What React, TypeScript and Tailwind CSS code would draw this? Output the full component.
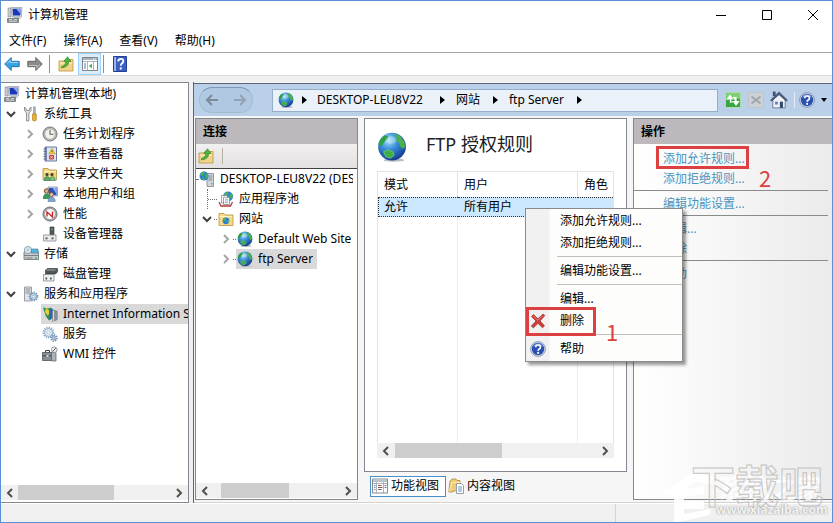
import type { ReactNode } from "react";

const FONT = "font-['Noto_Sans','Noto_Sans_CJK_SC',sans-serif]";

/* ---------- icons ---------- */

function Svg({ children, box = "0 0 16 16", className = "size-4" }: { children: ReactNode; box?: string; className?: string }) {
  return (
    <svg viewBox={box} className={`${className} shrink-0`} aria-hidden="true">
      {children}
    </svg>
  );
}

const ComputerIcon = () => (
  <Svg>
    <path d="M1 1h3v9H1z" fill="#c9ccd0" stroke="#83878c" strokeWidth=".6" />
    <path d="M4 0.5h11l-.6 9.5H5z" fill="#d9dde2" stroke="#8a8f98" strokeWidth=".6" />
    <path d="M5.5 1.8h8.2l-.4 6.8H6z" fill="#1c36b8" />
    <path d="M9 1.8h4.7l-.3 5z" fill="#8ea8ee" />
    <path d="M7 10h5l2 1.8H7z" fill="#b4b8bd" />
    <path d="M0.5 11.5h11v4H.5z" fill="#84898c" stroke="#5d6164" strokeWidth=".6" />
    <path d="M2 12.6h3M7 12.6h3M2 14.2h8" stroke="#dfe3e4" strokeWidth=".9" />
  </Svg>
);

const ToolsIcon = () => (
  <Svg>
    <path d="M1.500 1v3.500L3.500 7v8h2.400V7L8 4.500V1L6.300 2.800v1.700H3.300V2.800z" fill="#e3e5e8" stroke="#73787e" strokeWidth=".8" />
    <path d="M10.500 .8h1.800v7h-1.800z" fill="#aeb3b8" stroke="#7b8086" strokeWidth=".5" />
    <path d="M9.600 8h3.600v6.200q-1.800 1.600-3.600 0z" fill="#eeb62a" stroke="#a87611" strokeWidth=".7" />
  </Svg>
);

const ClockIcon = () => (
  <Svg>
    <circle cx="8" cy="8" r="7" fill="#b8bcc0" stroke="#74787c" />
    <circle cx="8" cy="8" r="5.200" fill="#f4f2e4" stroke="#9b9c9a" strokeWidth=".6" />
    <path d="M8 4v4.300h3.500" fill="none" stroke="#596673" strokeWidth="1.100" />
  </Svg>
);

const EventIcon = () => (
  <Svg>
    <path d="M3 1h11.500v14H3z" fill="#dde4f0" stroke="#5a6d94" strokeWidth=".9" />
    <path d="M3 1h2v14H3z" fill="#7186b3" />
    <path d="M1.500 3h2.500M1.500 5.500h2.500M1.500 8h2.500M1.500 10.500h2.500M1.500 13h2.500" stroke="#555f70" strokeWidth=".8" />
    <path d="M10 2.500l3.200 5.300H6.800z" fill="#f8d436" stroke="#a98813" strokeWidth=".5" />
    <path d="M10 4.300v2" stroke="#4c3c00" strokeWidth=".9" />
    <rect x="7" y="9" width="5" height="4.600" rx="1" fill="#d63c35" />
    <path d="M8.400 10.200l2.200 2.200m0-2.200l-2.200 2.200" stroke="#fff" strokeWidth=".8" />
  </Svg>
);

const SharedIcon = () => (
  <Svg>
    <path d="M1 2.500h5l1 1.500h7.500v10H1z" fill="#f3d67c" stroke="#b6913b" strokeWidth=".8" />
    <path d="M2 5.500h12" stroke="#fff2bd" />
    <circle cx="5" cy="8.500" r="1.600" fill="#31493a" />
    <path d="M2 14.500q.2-4 3-4t3 4z" fill="#54ab6e" stroke="#2d6e43" strokeWidth=".5" />
    <circle cx="10" cy="8.500" r="1.600" fill="#4a3a2d" />
    <path d="M7.800 14.500q.2-4 2.700-4t2.700 4z" fill="#78c38a" stroke="#2d6e43" strokeWidth=".5" />
  </Svg>
);

const UsersIcon = () => (
  <Svg>
    <path d="M6 1h9.500v9H6z" fill="#cbd4e4" stroke="#7f8ba3" strokeWidth=".7" />
    <path d="M7 2h7.500v7H7z" fill="#2c4fbe" />
    <path d="M10.500 2H14.500v6z" fill="#91abec" />
    <circle cx="4.500" cy="5" r="2.300" fill="#d8a87c" stroke="#5f402a" strokeWidth=".8" />
    <path d="M.8 13q.3-5.500 3.800-5.500T8.300 13z" fill="#3f9658" />
    <circle cx="9.500" cy="8.500" r="2" fill="#e7c49d" stroke="#72513a" strokeWidth=".8" />
    <path d="M6 15.500q.2-4.500 3.500-4.500t3.800 4.500z" fill="#83a5d4" stroke="#4b6c9d" strokeWidth=".5" />
  </Svg>
);

const PerfIcon = () => (
  <Svg>
    <circle cx="8" cy="8" r="7" fill="#a9adb0" stroke="#6c7073" />
    <circle cx="8" cy="8" r="5.300" fill="#fff" stroke="#8b8b8b" strokeWidth=".5" />
    <path d="M5 10.500V6l5.500 5V5.500" fill="none" stroke="#c42525" strokeWidth="1.400" />
  </Svg>
);

const DeviceIcon = () => (
  <Svg>
    <path d="M8 1h4v8H8z" fill="#53585a" stroke="#34383a" strokeWidth=".6" />
    <path d="M9.500 2.500h1.400v1.600H9.500z" fill="#59c66f" />
    <path d="M1.500 9h12.500v6H1.500z" fill="#e9ebec" stroke="#85898b" strokeWidth=".8" />
    <path d="M3.500 11.500h2v1.800h-2zM9.500 11.500h2v1.800h-2z" fill="#4c5052" />
  </Svg>
);

const StorageIcon = () => (
  <Svg>
    <path d="M1 6.500l2-3h11l1.500 3v7H1z" fill="#c6cacc" stroke="#686e72" strokeWidth=".8" />
    <path d="M1 9.500h14.500M2.500 12h7" stroke="#686e72" strokeWidth=".8" />
    <circle cx="5" cy="4" r="3.600" fill="#d8e9f0" stroke="#6e8b99" strokeWidth=".7" />
    <circle cx="5" cy="4" r="1" fill="#fff" stroke="#789" strokeWidth=".5" />
    <path d="M8.500 3h6.500v4H8.500z" fill="#59b6db" stroke="#3a7c9c" strokeWidth=".6" />
    <path d="M12 12h1.800" stroke="#35ba53" strokeWidth="1.300" />
  </Svg>
);

const DiskIcon = () => (
  <Svg>
    <path d="M3.500 4l2-1.500H15.500V6L13.500 8h-10z" fill="#4e5356" stroke="#303436" strokeWidth=".6" />
    <path d="M4.500 4h9" stroke="#a3a9ac" />
    <path d="M1.500 8.500h10.500V15H1.500z" fill="#eceeef" stroke="#85898c" strokeWidth=".8" />
    <path d="M3.500 11.500h1.600v2H3.500zM8 11.500h1.600v2H8z" fill="#4c5052" />
  </Svg>
);

const Gear = ({ cx, cy, r, color }: { cx: number; cy: number; r: number; color: string }) => (
  <g>
    <circle cx={cx} cy={cy} r={r} fill="none" stroke={color} strokeWidth="1.800" strokeDasharray="1.300 1" />
    <circle cx={cx} cy={cy} r={r - 1} fill="#e8f0f7" stroke={color} strokeWidth="1" />
    <circle cx={cx} cy={cy} r={r / 3} fill="#fff" stroke={color} strokeWidth=".7" />
  </g>
);

const ServicesAppIcon = () => (
  <Svg>
    <path d="M1.500 1h7v14h-7z" fill="#dfe3e6" stroke="#868c92" strokeWidth=".8" />
    <path d="M2.500 3h5M2.500 5h5M2.500 7h5" stroke="#7e858b" strokeWidth=".9" />
    <Gear cx={10.500} cy={10.500} r={4} color="#6f92b4" />
  </Svg>
);

const ServicesIcon = () => (
  <Svg>
    <Gear cx={6.500} cy={6.500} r={5} color="#8eacc8" />
    <Gear cx={12} cy={12} r={3} color="#7899ba" />
  </Svg>
);

const IisIcon = () => (
  <Svg>
    <path d="M1 1.500l5 1 3-1 2 2-1 9-3 2-3-4z" fill="#2b8f4b" />
    <path d="M4 2l4 3-2 5-3-4z" fill="#f0cf2f" />
    <path d="M7 4l4-1v8l-3 3z" fill="#2767b5" />
    <path d="M10.500 5l2-1v10.500l-2 1z" fill="#d5dadd" stroke="#6b7378" strokeWidth=".6" />
    <path d="M13.200 4.500l2 .7v8.500l-2 1z" fill="#8f979c" stroke="#5b6267" strokeWidth=".5" />
  </Svg>
);

const WmiIcon = () => (
  <Svg>
    <path d="M.5 6.500h10v8H.5z" fill="#868e96" stroke="#4c535a" strokeWidth=".8" />
    <path d="M3.500 6.500v-2h4v2M.5 9.800h10" fill="none" stroke="#3c4349" />
    <path d="M4.500 9h2v1.800h-2z" fill="#dfe4e8" />
    <path d="M9.500 6.500h4.500V15H9.500z" fill="#aab2ba" stroke="#5a6269" strokeWidth=".7" />
    <circle cx="12.300" cy="3.700" r="2.800" fill="#eef1f4" stroke="#7b838b" strokeWidth=".8" />
    <path d="M10.500 5.500l3.500-3.500" stroke="#5c6268" />
  </Svg>
);

const Globe = ({ className = "size-4" }: { className?: string }) => (
  <Svg className={className}>
    <defs>
      <radialGradient id="sea" cx=".38" cy=".28" r=".8">
        <stop offset="0" stopColor="#a6e3fb" />
        <stop offset=".4" stopColor="#3a8fd8" />
        <stop offset="1" stopColor="#0f2f86" />
      </radialGradient>
    </defs>
    <ellipse cx="9" cy="15" rx="5.500" ry=".9" fill="#b9bcc0" />
    <circle cx="8" cy="7.800" r="7.400" fill="url(#sea)" />
    <path d="M1 5.500Q2 3 4 1.800L6 2.300 5.500 3.800 3.800 5.500 2.600 7.500 1 7.300z" fill="#2f9f43" />
    <path d="M9 .8l3 1 2.600 3.500.4 2.700-1.200 1-1.600-1.500-.4-2-1.600-.5L10.500 3z" fill="#4cb04b" />
    <path d="M3.500 10.500l2.500-1 2.700 1.200.4 1.800-2 1.500-2.500-.8z" fill="#3fae45" stroke="#8ce07a" strokeWidth=".3" />
    <ellipse cx="7.300" cy="4.300" rx="3" ry="2" fill="#fff" opacity=".28" />
  </Svg>
);

const ServerIcon = () => (
  <Svg>
    <path d="M8 2.500h6.500V15.500H8z" fill="#cfd5da" stroke="#7b838a" strokeWidth=".8" />
    <path d="M9.300 5h4M9.300 7h4M9.300 9h4" stroke="#7b838a" strokeWidth=".9" />
    <path d="M12 12.800h1.300" stroke="#38b54c" strokeWidth="1.400" />
    <circle cx="5" cy="5" r="4.500" fill="#2d7fc9" />
    <path d="M1 4.200Q2.500 1 5 .6l.4 1.600-1.800 2.600zM6 4l2.500-1.500.8 3L7 7.500zM3 7l2-.4.8 2.400-1.500.3z" fill="#4db54e" />
  </Svg>
);

const PoolIcon = () => (
  <Svg>
    <circle cx="10" cy="5.500" r="5" fill="#3484cf" />
    <path d="M6 3.200l3-2.500 1 2-2 2.500zM11.500 3.500l3-.5.3 3.500-2.300.7z" fill="#4db54e" />
    <path d="M3.500 4.500h6V12h-6z" fill="#fff" stroke="#777" strokeWidth=".7" />
    <path d="M5.500 6.300h6v7.200h-6z" fill="#fff" stroke="#777" strokeWidth=".7" />
    <path d="M7 8.300h3M7 10h3M7 11.700h3" stroke="#7f96b5" strokeWidth=".8" />
    <path d="M1 11l2 4h9.500l2-4" fill="none" stroke="#b13b33" strokeWidth="1.300" />
  </Svg>
);

const SitesIcon = () => (
  <Svg>
    <path d="M1 2.500h5l1.200 1.500H15v10.500H1z" fill="#f5da88" stroke="#b8923d" strokeWidth=".8" />
    <path d="M1.800 5.500h12.500" stroke="#fff3c8" />
    <circle cx="8" cy="9.800" r="3.400" fill="#2d7fc9" />
    <path d="M5 9l2-2 1 1-1 2zM9 10l2-1v2l-1.500 1z" fill="#58c04f" />
  </Svg>
);

const UpFolder = () => (
  <Svg>
    <path d="M1 5h5l1.200-1.500H15v11.500H1z" fill="#f2d488" stroke="#b9933f" strokeWidth=".8" />
    <path d="M1.800 7h12.500" stroke="#fff1c4" />
    <path d="M3.500 10.500q4-.5 4.500-5H5.800L9.500.8 13 5.500h-2.200Q10.500 11 3.500 12z" fill="#4eb33b" stroke="#2e7c22" strokeWidth=".6" />
  </Svg>
);

const Arrow = ({ flip, fill, edge }: { flip?: boolean; fill: string; edge: string }) => (
  <Svg className={flip ? "size-4 rotate-180" : "size-4"}>
    <path d="M.7 8l6.500-6.500v3.800h8v5.400h-8v3.800z" fill={fill} stroke={edge} strokeWidth=".9" />
    <path d="M3 7.500l3.200-3.200v2.200h8" fill="none" stroke="#fff" strokeOpacity=".5" />
  </Svg>
);

const ConsoleIcon = () => (
  <Svg>
    <path d="M.5 1.500h15v13H.5z" fill="#fff" stroke="#7d848c" />
    <path d="M1 2h14v2H1z" fill="#a9b3bf" />
    <path d="M11 3h1M13 3h1" stroke="#fff" />
    <path d="M1 5.500h14M5.500 5.500v9M11.500 5.500v9" stroke="#9aa1a9" strokeWidth=".8" />
    <path d="M2 8h2M2 10h2M2 12h2" stroke="#4b76b8" />
    <path d="M9.800 7.500v5L7 10z" fill="#3ba24d" />
  </Svg>
);

const HelpBook = () => (
  <Svg>
    <path d="M1.500.5h13v15h-13z" fill="#3a5fc4" stroke="#223f94" />
    <path d="M2 1h2v14H2z" fill="#9db4ea" />
    <path d="M6.200 5.500q0-2.700 2.600-2.700t2.500 2.500q0 1.500-1.500 2.300-1 .6-1 2.200" fill="none" stroke="#fff" strokeWidth="1.800" />
    <circle cx="8.800" cy="12.500" r="1.150" fill="#fff" />
  </Svg>
);

const HelpCircle = () => (
  <Svg>
    <circle cx="8" cy="8" r="7.400" fill="#d6deee" stroke="#7686a8" strokeWidth=".8" />
    <circle cx="8" cy="8" r="6.200" fill="#2a50b0" />
    <path d="M3 6q5-4.500 10 0-1-3.600-5-3.600T3 6z" fill="#8ca6e2" />
    <path d="M5.700 6.300q0-2.300 2.400-2.300t2.300 2.200q0 1.200-1.200 1.900-1.100.6-1.100 1.600" fill="none" stroke="#fff" strokeWidth="1.700" />
    <circle cx="8.100" cy="11.900" r="1.050" fill="#fff" />
  </Svg>
);

const RefreshIcon = () => (
  <Svg>
    <path d="M.5.500h15v15H.500z" fill="#39a63f" stroke="#aedcac" />
    <path d="M1 1h14v6Q8 5 1 8z" fill="#7dcf78" />
    <path d="M5.500 10.500V6M2.500 7L5 3.500 7.500 7zM8 4.500" fill="#fff" stroke="#fff" strokeWidth="1.200" />
    <path d="M5.500 10h2.500M8 5.500h3v4.500M8.500 9.500L11 13l2.500-3.500z" fill="#fff" stroke="#fff" strokeWidth="1.200" />
  </Svg>
);

const StopIcon = () => (
  <Svg>
    <path d="M.5.500h15v15H.500z" fill="#cdd0d4" stroke="#c0c5cb" />
    <path d="M3.500 4.500l9 7M12.500 4.500l-9 7" stroke="#9fa5ac" strokeWidth="1.800" />
  </Svg>
);

const HomeIcon = () => (
  <Svg className="size-[18px]">
    <path d="M2.500 8L8 3l5.500 5v7h-11z" fill="#eef1f5" stroke="#66738c" strokeWidth=".8" />
    <path d="M2.500 .5h2.500v4H2.500z" fill="#455273" />
    <path d="M8 .8L.5 8l1 1L8 3l6.500 6 1-1z" fill="#4e6087" stroke="#33415f" strokeWidth=".5" />
    <path d="M8.800 9.500h2.700V15H8.800z" fill="#34466e" />
    <path d="M4.500 9.500h2.500v2.500H4.500z" fill="#5b82cb" />
  </Svg>
);

const DeleteIcon = () => (
  <Svg>
    <path d="M1.500 3.500L3.500 1.500 8 5.800l5-4.800 1.800 1.500L10 8l4.500 4.800-2 1.900L8 10.300l-4.500 4.500-2.200-1.600L6 8z" fill="#cf3b38" stroke="#9c2b2a" strokeWidth=".7" />
    <path d="M3.300 3L8 7.300 12.800 2.500" fill="none" stroke="#f0a09c" strokeWidth=".8" />
  </Svg>
);

const FeaturesIcon = () => (
  <Svg>
    <path d="M.5 1h15v14H.5z" fill="#fbfbfc" stroke="#858b93" />
    <path d="M1 1.500h14V4H1z" fill="#bcc3cd" />
    <path d="M4.500 4v11M11.500 4v11M1 5.500h14" stroke="#9ca2aa" strokeWidth=".8" />
    <path d="M2 7.500h1.500M2 9.500h1.500M2 11.500h1.500M12.500 7.500h2M12.500 9.500h2" stroke="#6b87b5" />
    <path d="M6 7.500h3.500M6 9.500h4.500M6 11.500h3.500" stroke="#8a5a55" />
  </Svg>
);

const ContentIcon = () => (
  <Svg>
    <path d="M2 3l2-2h4l1 1.500h3V11l-8 3H.8z" fill="#eecb76" stroke="#b08c3a" strokeWidth=".8" />
    <path d="M1.500 13.500L4 4.500h8" fill="none" stroke="#fff0bb" />
    <path d="M8.500 5.500h5l2 2v8h-7z" fill="#fff" stroke="#7f8791" strokeWidth=".8" />
    <path d="M10 9h4M10 11h4M10 13h4" stroke="#4f8bc6" strokeWidth=".9" />
  </Svg>
);

const Chevron = ({ className = "", d }: { className?: string; d: string }) => (
  <svg viewBox="0 0 10 10" className={`size-[10px] shrink-0 fill-none ${className}`} aria-hidden="true">
    <path d={d} stroke="currentColor" strokeWidth="2" />
  </svg>
);
const LEFT = "M7 1L3 5l4 4";
const RIGHT = "M3 1l4 4-4 4";
const DOWN = "M1 3l4 4 4-4";

/* ---------- shared parts ---------- */

function ScrollBar({ lead, thumb, label }: { lead: string; thumb: string; label: string }) {
  return (
    <div className="flex h-[15px] shrink-0 items-center bg-[#f0f0f0] text-[#505050]" role="group" aria-label={label}>
      <div className={`h-full ${lead}`}>
        <button type="button" aria-label="向左滚动" className="flex h-full w-[17px] items-center justify-center">
          <Chevron d={LEFT} />
        </button>
      </div>
      <div className={`h-full bg-[#cdcdcd] ${thumb}`} />
      <button type="button" aria-label="向右滚动" className="ml-auto flex h-full w-[18px] items-center justify-center">
        <Chevron d={RIGHT} />
      </button>
    </div>
  );
}

type Node = { label: string; icon: ReactNode; level: 0 | 1 | 2; open?: boolean; toggle?: boolean; selected?: boolean };

const consoleTree: Node[] = [
  { label: "计算机管理(本地)", icon: <ComputerIcon />, level: 0 },
  { label: "系统工具", icon: <ToolsIcon />, level: 1, toggle: true, open: true },
  { label: "任务计划程序", icon: <ClockIcon />, level: 2, toggle: true },
  { label: "事件查看器", icon: <EventIcon />, level: 2, toggle: true },
  { label: "共享文件夹", icon: <SharedIcon />, level: 2, toggle: true },
  { label: "本地用户和组", icon: <UsersIcon />, level: 2, toggle: true },
  { label: "性能", icon: <PerfIcon />, level: 2, toggle: true },
  { label: "设备管理器", icon: <DeviceIcon />, level: 2 },
  { label: "存储", icon: <StorageIcon />, level: 1, toggle: true, open: true },
  { label: "磁盘管理", icon: <DiskIcon />, level: 2 },
  { label: "服务和应用程序", icon: <ServicesAppIcon />, level: 1, toggle: true, open: true },
  { label: "Internet Information Services (IIS)", icon: <IisIcon />, level: 2, selected: true },
  { label: "服务", icon: <ServicesIcon />, level: 2 },
  { label: "WMI 控件", icon: <WmiIcon />, level: 2 },
];

const consoleLead = ["w-[2px]", "w-[21px] pr-[6px]", "w-[40px] pr-[6px]"];

function Toggle({ node }: { node: Node }) {
  if (!node.toggle) return null;
  return (
    <button type="button" aria-label={node.open ? `折叠 ${node.label}` : `展开 ${node.label}`} aria-expanded={!!node.open}>
      <Chevron className={node.open ? "text-[#404040]" : "text-[#a6a6a6]"} d={node.open ? DOWN : RIGHT} />
    </button>
  );
}

function ConsoleTree() {
  return (
    <aside className="flex w-[188px] shrink-0 flex-col border-y border-r border-[#828790] bg-white">
      <ul className="flex-1 overflow-hidden pt-px">
        {consoleTree.map((n) => (
          <li key={n.label} className="flex h-5 items-center">
            <span className={`flex shrink-0 items-center justify-end ${consoleLead[n.level]}`}>
              <Toggle node={n} />
            </span>
            <span className={`flex h-5 min-w-0 items-center gap-[5px] pl-px whitespace-nowrap ${n.selected ? "flex-1 bg-[#d9d9d9]" : ""}`}>
              {n.icon}
              <span className="overflow-hidden leading-5">{n.label}</span>
            </span>
          </li>
        ))}
      </ul>
      <ScrollBar lead="w-[17px]" thumb="w-[96px]" label="控制台树滚动条" />
      <div className="h-[2px]" />
    </aside>
  );
}

const sites: Node[] = [
  { label: "DESKTOP-LEU8V22 (DESKTOP-LEU8V22\\admin)", icon: <ServerIcon />, level: 0 },
  { label: "应用程序池", icon: <PoolIcon />, level: 1 },
  { label: "网站", icon: <SitesIcon />, level: 1, toggle: true, open: true },
  { label: "Default Web Site", icon: <Globe />, level: 2, toggle: true },
  { label: "ftp Server", icon: <Globe />, level: 2, toggle: true, selected: true },
];

const siteLead = ["w-[2px]", "w-[21px]", "w-[40px]"];
const stub = "border-t border-dotted border-[#707070]";

function Connections() {
  return (
    <section className="flex w-[163px] shrink-0 flex-col border border-[#828790] bg-white">
      <h2 className="h-[25px] bg-[#bcb8bb] pl-[7px] font-bold leading-[25px]">连接</h2>
      <div className="flex h-[25px] items-center gap-[8px] border-b border-[#404040] bg-gradient-to-b from-[#f1eff0] to-[#e2e0e1] pl-[2px]">
        <button type="button" aria-label="上移"><UpFolder /></button>
        <span className="h-4 w-px bg-[#b5b19c]" />
      </div>
      <ul className="flex-1 overflow-hidden">
        {sites.map((n) => (
          <li key={n.label} className="flex h-5 items-center">
            <span className={`flex h-5 shrink-0 items-center ${siteLead[n.level]}`}>
              {n.level === 0 && <span className={`w-[2px] ${stub}`} />}
              {n.level === 1 && !n.toggle && (
                <span className="ml-[11px] flex h-5 flex-1 items-center border-l border-dotted border-[#707070]">
                  <span className={`w-full ${stub}`} />
                </span>
              )}
              {n.toggle && (
                <>
                  <span className={n.level === 1 ? "w-[6px]" : "w-[25px]"} />
                  <Toggle node={n} />
                  <span className={`ml-[2px] w-[3px] ${stub}`} />
                </>
              )}
            </span>
            <span className={`flex h-5 min-w-0 items-center gap-[5px] pl-px pr-1 whitespace-nowrap ${n.selected ? "bg-[#d9d9d9]" : ""}`}>
              {n.icon}
              <span className="overflow-hidden leading-5">{n.label}</span>
            </span>
          </li>
        ))}
      </ul>
      <ScrollBar lead="w-[25px]" thumb="w-[68px]" label="连接滚动条" />
      <div className="h-px" />
    </section>
  );
}

function Rules() {
  return (
    <main className="flex min-w-0 flex-1 flex-col">
      <div className="flex flex-1 flex-col border border-[#828790] bg-white px-[12px] pb-[13px]">
        <header className="flex h-[52px] items-start gap-[19px] pt-[13px]">
          <Globe className="size-[30px]" />
          <h1 className="text-[18px] leading-6 text-[#202020]">FTP 授权规则</h1>
        </header>
        <table className="w-full flex-1 table-fixed border-separate border-spacing-0 border border-b-0 border-[#e3e3e3] text-left">
          <colgroup>
            <col className="w-[80px]" />
            <col className="w-[120px]" />
            <col />
          </colgroup>
          <thead>
            <tr className="h-[25px]">
              <th className="border-r border-[#e3e3e3] pl-[6px] font-normal">模式</th>
              <th className="border-r border-[#e3e3e3] pl-[6px] font-normal">用户</th>
              <th className="overflow-hidden pl-[6px] font-normal whitespace-nowrap">角色</th>
            </tr>
          </thead>
          <tbody>
            <tr className="h-[20px] bg-[#cce8ff]">
              <td className="border-y border-l border-dotted border-[#303030] pl-[5px]">允许</td>
              <td className="border-y border-dotted border-[#303030] pl-[6px]">所有用户</td>
              <td className="border-y border-dotted border-[#303030]" />
            </tr>
            <tr className="h-[225px]">
              <td className="border-r border-[#e8f0f6]" />
              <td className="border-r border-[#e8f0f6]" />
              <td />
            </tr>
          </tbody>
        </table>
        <ScrollBar lead="w-[18px]" thumb="w-[107px]" label="规则列表滚动条" />
      </div>
      <div className="flex h-[28px] items-center pl-[6px]">
        <button type="button" className="flex h-[21px] w-[76px] items-center gap-[3px] border border-[#4a90c8] bg-white pl-px whitespace-nowrap">
          <FeaturesIcon />
          功能视图
        </button>
        <button type="button" className="flex h-[21px] items-center gap-[3px] pl-[2px] whitespace-nowrap">
          <ContentIcon />
          内容视图
        </button>
      </div>
    </main>
  );
}

const actions = [["添加允许规则...", "添加拒绝规则..."], ["编辑功能设置..."], ["编辑...", "删除"], ["帮助"]];

function Actions() {
  return (
    <aside className="w-[199px] shrink-0 border-y border-l border-[#828790] bg-gradient-to-r from-white to-[#ebebec]">
      <h2 className="h-[25px] bg-[#bcb8bb] pl-[7px] font-bold leading-[25px]">操作</h2>
      <div className="pt-[5px] pr-1">
        {actions.map((group, i) => (
          <ul key={group[0]} className={i ? "border-t border-[#8b8b8b] pt-[3px] pb-px" : "pb-px"}>
            {group.map((a) => (
              <li key={a} className="h-5 pl-[29px] leading-5">
                <a href="#" className="text-[#4a94c0]">{a}</a>
              </li>
            ))}
          </ul>
        ))}
      </div>
    </aside>
  );
}

function MenuItem({ icon, children }: { icon?: ReactNode; children: ReactNode }) {
  return (
    <button type="button" role="menuitem" className="flex h-[22px] w-full items-center text-left whitespace-nowrap">
      <span className="flex w-[23px] shrink-0 justify-center">{icon}</span>
      <span className="pl-[11px]">{children}</span>
    </button>
  );
}

const MenuLine = () => <div className="ml-[31px] h-[6px] pt-[2px]"><div className="h-px bg-[#c4bfb8]" /></div>;

function ContextMenu() {
  return (
    <div role="menu" className="absolute top-[207px] left-[524px] w-[158px] border border-[#8a8a8a] bg-gradient-to-r from-[#f1f1f1] from-[23px] to-[#fdfdfb] to-[24px] py-px shadow-[3px_3px_3px_rgba(0,0,0,0.4)]">
      <MenuItem>添加允许规则...</MenuItem>
      <MenuItem>添加拒绝规则...</MenuItem>
      <MenuLine />
      <MenuItem>编辑功能设置...</MenuItem>
      <MenuLine />
      <MenuItem>编辑...</MenuItem>
      <MenuItem icon={<DeleteIcon />}>删除</MenuItem>
      <MenuLine />
      <MenuItem icon={<HelpCircle />}>帮助</MenuItem>
    </div>
  );
}

const Tri = () => (
  <svg viewBox="0 0 5 8" className="h-2 w-[5px] shrink-0" aria-hidden="true"><path d="M0 0l5 4-5 4z" /></svg>
);

function AddressBar() {
  return (
    <div className="flex h-[33px] shrink-0 items-center border-t border-[#5d6472] bg-[#b9d0e8] pr-[5px] pl-[5px]">
      <div className="flex h-[26px] w-[54px] items-center justify-between rounded-[13px] border border-[#a3bad5] border-t-[#7c96b8] bg-[#b0c8e2] px-[5px] text-[#7d8a99]">
        <button type="button" aria-label="后退">
          <Svg className="size-[14px]" box="0 0 14 14"><path d="M13 7H2M7 2L2 7l5 5" fill="none" stroke="currentColor" strokeWidth="2" /></Svg>
        </button>
        <button type="button" aria-label="前进">
          <Svg className="size-[14px]" box="0 0 14 14"><path d="M1 7h11M7 2l5 5-5 5" fill="none" stroke="#93a3b6" strokeWidth="2" /></Svg>
        </button>
      </div>
      <nav aria-label="路径" className="ml-[19px] flex h-[23px] flex-1 items-center border border-[#93adca] bg-[#eaf1f9] pl-[5px] whitespace-nowrap">
        <Globe />
        <span className="ml-[8px]"><Tri /></span>
        <button type="button" className="ml-[10px]">DESKTOP-LEU8V22</button>
        <span className="ml-[17px]"><Tri /></span>
        <button type="button" className="ml-[11px]">网站</button>
        <span className="ml-[13px]"><Tri /></span>
        <button type="button" className="ml-[11px]">ftp Server</button>
        <span className="ml-[13px]"><Tri /></span>
      </nav>
      <div className="ml-[7px] flex items-center">
        <button type="button" aria-label="刷新"><RefreshIcon /></button>
        <button type="button" aria-label="停止" className="ml-[7px]"><StopIcon /></button>
        <button type="button" aria-label="主页" className="ml-[6px]"><HomeIcon /></button>
        <span className="ml-[6px] h-4 w-px bg-[#e4edf7]" />
        <button type="button" aria-label="帮助" className="ml-[4px] flex items-center gap-[6px]">
          <HelpCircle />
          <svg viewBox="0 0 6 4" className="h-1 w-[6px]" aria-hidden="true"><path d="M0 0h6L3 4z" /></svg>
        </button>
      </div>
    </div>
  );
}

function Watermark() {
  return (
    <div className="pointer-events-none absolute right-0 bottom-0 h-[64px] w-[180px] select-none">
      <svg viewBox="0 0 180 64" className="absolute inset-0 size-full" aria-hidden="true">
        <path d="M6 36L42 14 62 19 58 27 44 23 32 31l20-3v8l-20 3v4h20v8H32v5l26-5v6l-36 8V38z" fill="#fff" fillOpacity=".9" />
      </svg>
      <span className="absolute top-[14px] left-[66px] text-[26px] leading-8 font-bold whitespace-nowrap text-white/80">系统之家</span>
      <span className="absolute top-0 left-[39px] text-[44px] leading-[56px] font-bold whitespace-nowrap text-transparent [-webkit-text-stroke:1px_#c4c4c4]">下载吧</span>
      <span className="absolute top-[44px] left-[64px] text-[12px] leading-4 font-bold whitespace-nowrap text-[#f4f4f4] [text-shadow:0_0_1px_#999,0_0_2px_#aaa]">www.xiazaiba.com</span>
    </div>
  );
}

const note = "absolute font-['Noto_Sans_CJK_SC',sans-serif] text-[22px] leading-6 text-[#dc4040]";

export default function App() {
  return (
    <div className={`relative flex h-screen flex-col overflow-hidden border border-[#5b8fd2] bg-[#f0f0f0] text-[12px] leading-4 text-black ${FONT}`}>
      <header className="bg-white">
        <div className="flex h-[27px] items-center pl-[6px]">
          <ComputerIcon />
          <span className="ml-[5px]">计算机管理</span>
          <div className="ml-auto flex">
            <button type="button" aria-label="最小化" className="flex w-[46px] justify-center">
              <Svg className="size-[10px]" box="0 0 10 10"><path d="M0 5.500h10" stroke="#000" /></Svg>
            </button>
            <button type="button" aria-label="最大化" className="flex w-[46px] justify-center">
              <Svg className="size-[10px]" box="0 0 10 10"><path d="M.5.500h9v9h-9z" fill="none" stroke="#000" /></Svg>
            </button>
            <button type="button" aria-label="关闭" className="mr-[-4px] flex w-[46px] justify-center">
              <Svg className="size-[10px]" box="0 0 10 10"><path d="M0 0l10 10M10 0L0 10" stroke="#000" /></Svg>
            </button>
          </div>
        </div>
        <nav aria-label="菜单栏" className="flex h-[25px] items-center gap-[17px] border-b border-[#a8a8a8] pt-[2px] pl-[8px]">
          <button type="button">文件(F)</button>
          <button type="button">操作(A)</button>
          <button type="button">查看(V)</button>
          <button type="button">帮助(H)</button>
        </nav>
        <div className="flex h-[23px] items-center border-b border-[#dcdcdc] pl-[3px]">
          <button type="button" aria-label="后退"><Arrow fill="#38a3e2" edge="#1e6ea8" /></button>
          <button type="button" aria-label="前进" className="ml-[7px]"><Arrow flip fill="#8b8b8b" edge="#5f5f5f" /></button>
          <span className="ml-[6px] h-[18px] w-px bg-[#8f8f8f]" />
          <button type="button" aria-label="上移" className="ml-[8px]"><UpFolder /></button>
          <button type="button" aria-label="显示控制台树" aria-pressed="true" className="ml-[4px] flex h-[22px] w-[23px] items-center justify-center border border-[#99d1ff] bg-[#d8ecfb]"><ConsoleIcon /></button>
          <span className="ml-[2px] h-[18px] w-px bg-[#8f8f8f]" />
          <button type="button" aria-label="帮助" className="ml-[8px]"><HelpBook /></button>
        </div>
      </header>

      <div className="flex min-h-0 flex-1 pt-[6px]">
        <ConsoleTree />
        <div className="ml-[4px] flex min-w-0 flex-1 flex-col border-l border-[#5d6472] bg-[#f6f6f6] pt-px">
          <AddressBar />
          <div className="flex min-h-0 flex-1 gap-[6px] border-b border-[#d4d4d4] pt-[2px] pb-[2px] pl-px">
            <Connections />
            <Rules />
            <Actions />
          </div>
        </div>
      </div>

      <footer className="flex h-[19px] shrink-0 justify-end border-t border-white">
        <span className="h-full w-[217px] border-l border-[#d4d4d4]" />
      </footer>

      <Watermark />
      <ContextMenu />
      <div className="pointer-events-none absolute top-[306px] left-[525px] h-[29px] w-[70px] border-[3px] border-[#dc4040]" />
      <span className={`top-[318px] left-[605px] ${note}`}>1</span>
      <div className="pointer-events-none absolute top-[145px] right-[83px] h-[23px] w-[93px] border-[3px] border-[#dc4040]" />
      <span className={`top-[164px] left-[758px] ${note}`}>2</span>
    </div>
  );
}
